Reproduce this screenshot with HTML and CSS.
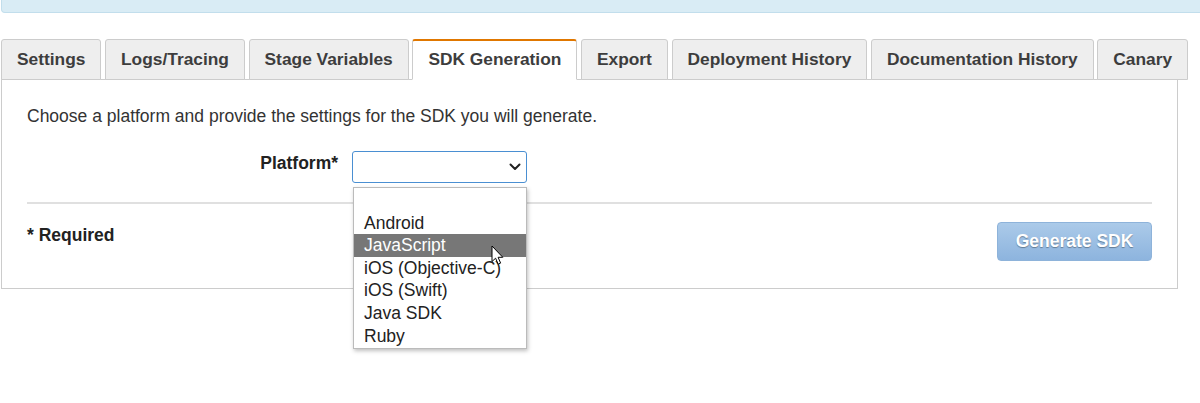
FILE: index.html
```html
<!DOCTYPE html>
<html lang="en">
<head>
<meta charset="utf-8">
<title>SDK Generation</title>
<link rel="stylesheet" href="styles.css">
</head>
<body>
<div class="banner-clip"><div class="banner"></div></div>
<div class="stage">
  <ul class="tabs">
    <li class="tab">Settings</li>
    <li class="tab">Logs/Tracing</li>
    <li class="tab">Stage Variables</li>
    <li class="tab active">SDK Generation</li>
    <li class="tab">Export</li>
    <li class="tab">Deployment History</li>
    <li class="tab">Documentation History</li>
    <li class="tab">Canary</li>
  </ul>
  <div class="panel">
    <p class="intro">Choose a platform and provide the settings for the SDK you will generate.</p>
    <div class="form-row">
      <label class="label">Platform*</label>
      <div class="select-wrap">
        <div class="select">
          <svg class="chevron" width="12" height="8" viewBox="0 0 12 8"><path d="M1.5 1.5 L6 6 L10.5 1.5" fill="none" stroke="#222" stroke-width="2" stroke-linecap="round" stroke-linejoin="round"/></svg>
        </div>
        <ul class="dropdown">
          <li class="opt">&nbsp;</li>
          <li class="opt">Android</li>
          <li class="opt hl">JavaScript</li>
          <li class="opt">iOS (Objective-C)</li>
          <li class="opt">iOS (Swift)</li>
          <li class="opt">Java SDK</li>
          <li class="opt">Ruby</li>
        </ul>
        <svg class="cursor" width="14" height="22" viewBox="0 0 14 22"><path d="M1 1 L1 16.5 L4.6 13.2 L7.2 19.2 L9.6 18.1 L7.1 12.3 L11.8 12.3 Z" fill="#fff" stroke="#000" stroke-width="1" stroke-linejoin="round"/></svg>
      </div>
    </div>
    <div class="divider"></div>
    <div class="footer">
      <span class="required">* Required</span>
      <button class="btn">Generate SDK</button>
    </div>
  </div>
</div>
</body>
</html>
```
FILE: styles.css
```css
html, body {
  margin: 0;
  padding: 0;
  background: #fff;
}
body {
  font-family: "Liberation Sans", Arial, sans-serif;
  color: #333;
  min-height: 403px;
}
.banner-clip {
  overflow: hidden;
  width: 1200px;
}
.banner {
  height: 12px;
  margin-left: 1px;
  margin-right: -20px;
  background: #d9ecf5;
  border: 1px solid #c2deec;
  border-top: none;
  border-radius: 0 0 4px 4px;
}
.stage {
  padding: 26px 0 0 1px;
  width: 1177px;
}
.tabs {
  list-style: none;
  margin: 0;
  padding: 0;
  display: flex;
  gap: 3.6px;
  width: 1199px;
  position: relative;
  z-index: 1;
}
.tab {
  box-sizing: border-box;
  height: 41px;
  padding: 0 15px;
  border: 1px solid #ccc;
  border-radius: 3px 3px 0 0;
  background: #eee;
  font-size: 17.35px;
  font-weight: bold;
  color: #3d3d3d;
  line-height: 38px;
  white-space: nowrap;
}
.tab.active {
  background: #fff;
  border-top: 2px solid #e07700;
  border-bottom-color: #fff;
  line-height: 37px;
}
.panel {
  box-sizing: border-box;
  border: 1px solid #ccc;
  margin-top: -1px;
  padding: 25px 25px 25px 25px;
  height: 210px;
}
.intro {
  margin: 0;
  font-size: 17.5px;
  line-height: 22px;
  color: #333;
}
.form-row {
  display: flex;
  align-items: flex-start;
  margin-top: 24px;
}
.label {
  width: 311px;
  margin-right: 14px;
  text-align: right;
  font-size: 17.5px;
  font-weight: bold;
  color: #222;
  line-height: 22px;
  padding-top: 1px;
}
.select-wrap {
  position: relative;
}
.select {
  box-sizing: border-box;
  width: 175px;
  height: 32px;
  border: 1px solid #4a8fd2;
  border-radius: 3px;
  background: #fff;
  display: flex;
  align-items: center;
  justify-content: flex-end;
  padding-right: 5px;
}
.chevron {
  display: block;
}
.dropdown {
  position: absolute;
  left: 1px;
  top: 36px;
  z-index: 5;
  box-sizing: border-box;
  width: 174px;
  margin: 0;
  padding: 1px 0;
  list-style: none;
  background: #fff;
  border: 1px solid #bbb;
  box-shadow: 1px 2px 4px rgba(0, 0, 0, 0.25);
}
.opt {
  height: 22.6px;
  line-height: 22px;
  padding-left: 10px;
  font-size: 17.5px;
  color: #222;
  white-space: nowrap;
}
.opt.hl {
  background: #777;
  color: #fff;
}
.cursor {
  position: absolute;
  left: 139px;
  top: 94px;
  z-index: 6;
}
.divider {
  margin-top: 19px;
  border-top: 2px solid #e0e0e0;
}
.footer {
  display: flex;
  justify-content: space-between;
  align-items: flex-start;
  margin-top: 18px;
}
.required {
  font-size: 17.5px;
  font-weight: bold;
  color: #222;
  line-height: 22px;
  margin-top: 2px;
}
.btn {
  box-sizing: border-box;
  width: 155px;
  height: 39px;
  border: 1px solid #8eb3da;
  border-radius: 4px;
  background: linear-gradient(#abcae9, #8db4de);
  color: #fff;
  font-family: "Liberation Sans", Arial, sans-serif;
  font-size: 17.5px;
  font-weight: bold;
  text-shadow: 0 1px 1px rgba(0, 0, 0, 0.35);
  padding: 0;
}
```
